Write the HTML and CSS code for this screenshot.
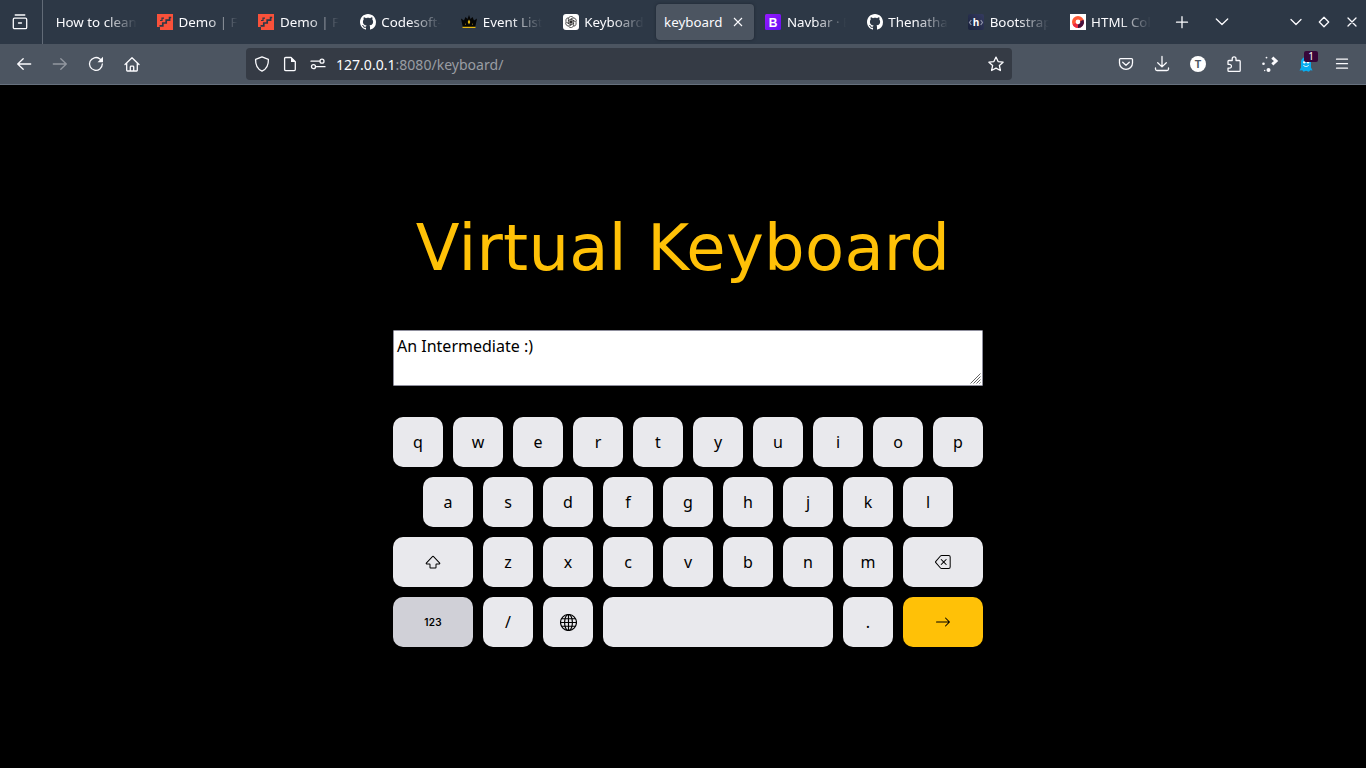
FILE: index.html
```html
<!DOCTYPE html>
<html lang="en">
<head>
<meta charset="utf-8">
<title>keyboard</title>
<link rel="stylesheet" href="styles.css">
</head>
<body>
<svg class="defs" aria-hidden="true">
  <symbol id="github" viewBox="0 0 16 16"><path d="M8 0C3.58 0 0 3.58 0 8c0 3.54 2.29 6.53 5.47 7.59.4.07.55-.17.55-.38 0-.19-.01-.82-.01-1.49-2.01.37-2.53-.49-2.69-.94-.09-.23-.48-.94-.82-1.13-.28-.15-.68-.52-.01-.53.63-.01 1.08.58 1.23.82.72 1.21 1.87.87 2.33.66.07-.52.28-.87.51-1.07-1.78-.2-3.64-.89-3.64-3.95 0-.87.31-1.59.82-2.15-.08-.2-.36-1.02.08-2.12 0 0 .67-.21 2.2.82.64-.18 1.32-.27 2-.27s1.36.09 2 .27c1.53-1.04 2.2-.82 2.2-.82.44 1.1.16 1.92.08 2.12.51.56.82 1.27.82 2.15 0 3.07-1.87 3.75-3.65 3.95.29.25.54.73.54 1.48 0 1.07-.01 1.93-.01 2.2 0 .21.15.46.55.38A8.01 8.01 0 0 0 16 8c0-4.42-3.58-8-8-8"/></symbol>
  <symbol id="steps" viewBox="0 0 16 16"><path fill="#f9513a" d="M0 0h16v16H3v-3H0z"/><path fill="none" stroke="#2d3846" stroke-width="1.700" d="M2.500 11.800h3.300V9h3.400V6.200h3.400V3.500h1.600"/><path fill="none" stroke="#2d3846" stroke-width="1.200" d="M3 6.500h2V4.200h2"/></symbol>
</svg>
<header class="tabs">
  <div class="recent"><svg class="ico" viewBox="0 0 16 16"><path d="M3.200 1h9.600M2.500 4.200h11c.7 0 1.200.5 1.200 1.200v8c0 .8-.5 1.300-1.300 1.300H2.600c-.8 0-1.300-.5-1.300-1.300v-8c0-.7.500-1.200 1.200-1.200zM6.500 9h3"/></svg></div>
  <nav class="strip">
    <div class="tab"><span class="label">How to clean</span></div>
    <div class="tab"><svg class="fav"><use href="#steps"/></svg><span class="label">Demo | F</span></div>
    <div class="tab"><svg class="fav"><use href="#steps"/></svg><span class="label">Demo | F</span></div>
    <div class="tab"><svg class="fav white"><use href="#github"/></svg><span class="label">Codesoft-</span></div>
    <div class="tab"><svg class="fav" viewBox="0 0 16 16"><path fill="#050505" d="M0 4.500 3 6.500 4.500 3l2 2L8 1l1.500 4 2-2L13 6.500l3-2L14 14H2z"/><path fill="#e8b90f" d="m8 5.500 1.300 2.500L8 10.500 6.700 8zM1.500 12.800h13v1.200h-13z"/><path stroke="#ad8b13" stroke-width=".6" d="M4.500 9.500v1.500M11.500 9.500v1.500"/></svg><span class="label">Event List</span></div>
    <div class="tab"><svg class="fav" viewBox="0 0 16 16"><rect width="16" height="16" rx="3" fill="#fff"/><g fill="none" stroke="#222" stroke-width=".7"><path id="loop" d="M5.400 9.500V5.100a2.700 2.700 0 0 1 5-1.400M5.400 6.500l4 2.300"/><use href="#loop" transform="rotate(60 8 8)"/><use href="#loop" transform="rotate(120 8 8)"/><use href="#loop" transform="rotate(180 8 8)"/><use href="#loop" transform="rotate(240 8 8)"/><use href="#loop" transform="rotate(300 8 8)"/></g></svg><span class="label">Keyboard</span></div>
    <div class="tab active"><span class="title">keyboard</span><svg class="close" viewBox="0 0 10 10"><path d="m1 1 8 8M9 1 1 9"/></svg></div>
    <div class="tab"><svg class="fav" viewBox="0 0 16 16"><defs><linearGradient id="violet" x1="0" y1="0" x2="1" y2="1"><stop stop-color="#9618ff"/><stop offset="1" stop-color="#6610f2"/></linearGradient></defs><rect width="16" height="16" rx="1.500" fill="url(#violet)"/><text class="mark-b" x="8" y="12.500">B</text></svg><span class="label">Navbar · B</span></div>
    <div class="tab"><svg class="fav white"><use href="#github"/></svg><span class="label">Thenatha</span></div>
    <div class="tab"><svg class="fav" viewBox="0 0 16 16"><defs><linearGradient id="navy" x1="0" y1="1" x2="1" y2="0"><stop stop-color="#19213b"/><stop offset="1" stop-color="#353b60"/></linearGradient></defs><rect width="16" height="16" rx="2" fill="url(#navy)"/><path fill="none" stroke="#8e92a8" stroke-width="1.200" d="M3.300 6 1.500 8.500 3.300 11M12.700 6l1.800 2.500-1.800 2.500"/><text class="mark-h" x="8" y="12">h</text></svg><span class="label">Bootstrap</span></div>
    <div class="tab"><svg class="fav" viewBox="0 0 16 16"><path fill="#fff" d="M0 0h16v16H0z"/><g fill="none" stroke-width="3.600"><circle cx="8" cy="8" r="4.200" stroke="#ff5a36"/><path stroke="#ef2c43" d="M4.200 9.800A4.200 4.200 0 0 0 8 12.200"/><path stroke="#47123f" d="M8 12.200A4.200 4.200 0 0 0 11.900 6.500"/></g></svg><span class="label">HTML Col</span></div>
  </nav>
  <svg class="ico newtab" viewBox="0 0 16 16"><path d="M8 2.700v11M2.500 8.200h11"/></svg>
  <svg class="ico alltabs" viewBox="0 0 16 16"><path d="m2.300 5 5.700 5.500L13.700 5"/></svg>
  <div class="window">
    <svg class="ico" viewBox="0 0 16 16"><path d="m3 5.500 5 5 5-5"/></svg>
    <svg class="ico" viewBox="0 0 16 16"><path d="M8 3.300 12.700 8 8 12.700 3.300 8z"/></svg>
    <svg class="ico" viewBox="0 0 16 16"><path d="m4 4 8 8M12 4l-8 8"/></svg>
  </div>
</header>
<div class="toolbar">
  <span class="btn"><svg class="ico" viewBox="0 0 16 16"><path d="M14.700 8H1.700M7.200 2.700 1.700 8l5.500 5.300"/></svg></span>
  <span class="btn dim"><svg class="ico" viewBox="0 0 16 16"><path d="M1.300 8h13M8.800 2.700 14.300 8l-5.500 5.300"/></svg></span>
  <span class="btn"><svg class="ico" viewBox="0 0 16 16"><path d="M14.300 8A6.400 6.400 0 1 1 11.700 2.800l2 1.900"/><path class="solid" d="M15 .8v5.500H9.500z"/></svg></span>
  <span class="btn"><svg class="ico home" viewBox="0 0 16 16"><path d="m1 8.500 7-6.800 7 6.800M2.700 7.200v7.100c0 .4.300.7.700.7h9.200c.4 0 .7-.3.700-.7V7.200M6.300 15v-4c0-.5.300-.8.800-.8h1.800c.5 0 .8.300.8.800v4"/></svg></span>
  <div class="url">
    <svg class="ico shield" viewBox="0 0 16 16"><path d="m8 .9 6.400 2.500c.2 5-.8 9.300-6.400 11.800C2.400 12.700 1.400 8.400 1.600 3.400z"/></svg>
    <svg class="ico page" viewBox="0 0 16 16"><path d="M3.700 1.500H9l4.300 4.200v7.800c0 .7-.4 1.100-1.100 1.100H3.700c-.7 0-1.100-.4-1.100-1.100V2.600c0-.7.400-1.100 1.100-1.100z"/><path class="solid" d="M9 1.200v4.800h4.500z"/></svg>
    <svg class="ico perms" viewBox="0 0 16 16"><path d="M1 5.200h8.500M6.500 10.700H15"/><circle cx="12" cy="5.200" r="2"/><circle cx="3.500" cy="10.700" r="2"/></svg>
    <span class="address">127.0.0.1<span class="path">:8080/keyboard/</span></span>
    <svg class="ico star" viewBox="0 0 16 16"><path d="m8 1.100 2.100 4.500 5 .6-3.700 3.400 1 4.900L8 12.100l-4.400 2.400 1-4.900L.9 6.200l5-.6z"/></svg>
  </div>
  <span class="btn"><svg class="ico" viewBox="0 0 16 16"><path d="M2.500 2.600h11c.6 0 1 .4 1 1v3.300a6.500 6.500 0 0 1-13 0V3.600c0-.6.400-1 1-1zM4.700 6.300 8 9.300l3.300-3"/></svg></span>
  <span class="btn"><svg class="ico down" viewBox="0 0 16 16"><path d="M8 .5v10.200M3.700 6.700 8 10.900l4.300-4.200M1.500 12v1c0 .9.500 1.500 1.500 1.500h10c1 0 1.500-.6 1.500-1.500v-1"/></svg></span>
  <span class="btn"><span class="avatar">T</span></span>
  <span class="btn"><svg class="ico" viewBox="0 0 16 16"><path d="M2 8.300V5.400c0-.5.300-.9.900-.9h3.300V2.800a1.900 1.900 0 0 1 3.800 0v1.700h3.300c.6 0 .9.400.9.900v9c0 .5-.3.900-.9.900H2.900c-.6 0-.9-.4-.9-.9v-2.200h1.500a1.900 1.900 0 0 0 0-3.900z"/></svg></span>
  <span class="btn"><svg class="ico" viewBox="0 0 16 16"><g class="solid"><circle cx="1.500" cy="7.700" r="1.300"/><circle cx="4.500" cy="1.600" r=".9"/><circle cx="2.700" cy="14.500" r=".7"/><circle cx="6.500" cy="14" r="2"/></g><path class="thick" d="m10.300 1.700 3.700 3.300-3.700 3.300"/></svg></span>
  <span class="btn ghost"><svg class="fav" viewBox="0 0 16 16"><path fill="#08adf0" d="M3 6a5 5 0 0 1 10 0v5.500l1.500 3-2.200-.3-1.500 1.500L8 14.700l-2.500 1-1.200-1.500-2.800.3L3 11.500z"/><circle cx="6.300" cy="6.300" r="1.200" fill="#fff"/><circle cx="10" cy="6.300" r="1.200" fill="#fff"/><path fill="none" stroke="#fff" d="M5.300 9c1.300 2 4.300 2 5.400 0"/></svg><span class="badge">1</span></span>
  <span class="btn"><svg class="ico" viewBox="0 0 16 16"><path d="M2.500 3.200h11M2.500 7.700h11M2.500 12.200h11"/></svg></span>
</div>
<main class="page-body">
  <h1 class="heading">Virtual Keyboard</h1>
  <div class="field"><textarea class="input" spellcheck="false">An Intermediate :)</textarea><svg class="grip" viewBox="0 0 11 11"><path d="M.5 10.500l10-10M3.500 10.500l7-7M6.500 10.500l4-4M9.500 10.500l1-1"/></svg></div>
  <div class="keys">
    <div class="row"><button class="key">q</button><button class="key">w</button><button class="key">e</button><button class="key">r</button><button class="key">t</button><button class="key">y</button><button class="key">u</button><button class="key">i</button><button class="key">o</button><button class="key">p</button></div>
    <div class="row"><button class="key">a</button><button class="key">s</button><button class="key">d</button><button class="key">f</button><button class="key">g</button><button class="key">h</button><button class="key">j</button><button class="key">k</button><button class="key">l</button></div>
    <div class="row"><button class="key wide"><svg class="glyph" viewBox="0 0 16 16"><path d="M7.270 2.047a1 1 0 0 1 1.460 0l6.345 6.770c.6.638.146 1.683-.73 1.683H11.500v3a1 1 0 0 1-1 1h-5a1 1 0 0 1-1-1v-3H1.654C.78 10.500.326 9.455.924 8.816zM14.346 9.500 8 2.731 1.654 9.500H4.500a1 1 0 0 1 1 1v3h5v-3a1 1 0 0 1 1-1z"/></svg></button><button class="key">z</button><button class="key">x</button><button class="key">c</button><button class="key">v</button><button class="key">b</button><button class="key">n</button><button class="key">m</button><button class="key wide"><svg class="glyph" viewBox="0 0 16 16"><path d="M5.830 5.146a.5.5 0 0 0 0 .708L7.975 8l-2.147 2.146a.5.5 0 0 0 .707.708l2.147-2.147 2.146 2.147a.5.5 0 0 0 .707-.708L9.390 8l2.146-2.146a.5.5 0 0 0-.707-.708L8.683 7.293 6.536 5.146a.5.5 0 0 0-.707 0z"/><path d="M13.683 1a2 2 0 0 1 2 2v10a2 2 0 0 1-2 2h-7.080a2 2 0 0 1-1.519-.698L.241 8.650a1 1 0 0 1 0-1.302L5.084 1.700A2 2 0 0 1 6.603 1zm-7.080 1a1 1 0 0 0-.76.35L1 8l4.844 5.650a1 1 0 0 0 .759.35h7.080a1 1 0 0 0 1-1V3a1 1 0 0 0-1-1z"/></svg></button></div>
    <div class="row"><button class="key wide gray">123</button><button class="key">/</button><button class="key"><svg class="glyph line" viewBox="0 0 16 16"><circle cx="8" cy="8" r="7.500"/><ellipse cx="8" cy="8" rx="3.700" ry="7.500"/><path d="M8 .5v15M.5 8h15M1.600 4.500h12.800M1.600 11.500h12.800"/></svg></button><button class="key space" aria-label="Space"></button><button class="key">.</button><button class="key wide gold"><svg class="glyph" viewBox="0 0 16 16"><path d="M1 8a.5.5 0 0 1 .5-.5h11.793l-3.147-3.146a.5.5 0 0 1 .708-.708l4 4a.5.5 0 0 1 0 .708l-4 4a.5.5 0 0 1-.708-.708L13.293 8.500H1.500A.5.5 0 0 1 1 8"/></svg></button></div>
  </div>
</main>
</body>
</html>
```
FILE: styles.css
```css
* { box-sizing: border-box; }
body { margin: 0; height: 768px; overflow: hidden; background: #000; font-family: "Noto Sans", sans-serif; }
.defs { position: absolute; width: 0; height: 0; }
.ico { width: 16px; height: 16px; flex: none; fill: none; stroke: #fbfbfe; stroke-width: 1.3; stroke-linecap: round; stroke-linejoin: round; overflow: visible; }
.ico .solid { fill: #fbfbfe; stroke: none; }
.ico .thick { stroke-width: 3; stroke-linecap: butt; stroke-linejoin: miter; }

.tabs { height: 44px; display: flex; align-items: center; background: #2d3846; color: #fbfbfe; font-size: 13.33px; }
.recent { width: 43px; height: 44px; padding-left: 12px; display: flex; align-items: center; border-right: 1px solid #626b77; }
.strip { display: flex; margin-left: 4.700px; flex: none; }
.tab { width: 101.400px; height: 36px; padding: 0 12.400px 0 8px; display: flex; align-items: center; gap: 5.500px; flex: none; }
.fav { width: 16px; height: 16px; flex: none; }
.white { fill: #fff; }
.label { flex: 1; min-width: 0; overflow: hidden; white-space: nowrap; -webkit-mask-image: linear-gradient(to left, transparent, #000 32px); mask-image: linear-gradient(to left, transparent, #000 32px); }
.active { width: 98px; margin-right: 3.400px; padding: 0 11px 0 8px; justify-content: space-between; background: #4c5561; border-radius: 4px; box-shadow: 0 0 3px #1d2530; }
.close { width: 10px; height: 10px; stroke: #fbfbfe; stroke-width: 1.100; }
.mark-b { font: bold 12px "Liberation Sans", sans-serif; fill: #fff; text-anchor: middle; }
.mark-h { font: bold 10px "Open Sans", sans-serif; fill: #fff; text-anchor: middle; }
.newtab { margin-left: 11px; }
.alltabs { margin-left: 24.500px; }
.window { margin-left: auto; padding-right: 6px; display: flex; gap: 12px; }

.toolbar { height: 41px; padding: 0 6px; display: flex; align-items: center; background: #4c5561; border-bottom: 1px solid #67717e; }
.btn { width: 36px; height: 32px; display: flex; align-items: center; justify-content: center; flex: none; }
.dim { opacity: .4; }
.home, .down { margin-right: 1px; }
.url { width: 766px; height: 32px; margin: 0 auto; padding: 0 8px; display: flex; align-items: center; background: #353b45; border-radius: 4px; }
.page { margin-left: 12px; }
.perms { margin-left: 12px; }
.address { flex: 1; margin-left: 10px; font-size: 14.050px; color: #fbfbfe; white-space: nowrap; }
.path { color: #999da3; }
.avatar { width: 16px; height: 16px; border-radius: 50%; background: #fff; color: #4c5561; font: bold 10.500px/16px "Liberation Sans", sans-serif; text-align: center; }
.ghost { position: relative; }
.badge { position: absolute; left: 16px; top: 3px; width: 14px; height: 11px; border-radius: 2px; background: #370639; color: #fff; font-size: 10px; line-height: 11px; text-align: center; }

.page-body { width: 590px; margin-left: 393px; padding-top: 126px; }
.heading { margin: 0; width: 580px; height: 75px; font: 400 64px/75px "DejaVu Sans", sans-serif; letter-spacing: .25px; color: #ffc107; text-align: center; white-space: nowrap; }
.field { position: relative; height: 56px; margin-top: 44px; }
.input { display: block; width: 590px; height: 56px; margin: 0; padding: 3px; border: 1px solid #8f8f9d; border-radius: 1px; background: #fff; color: #000; font: 16px/24px "Noto Sans", sans-serif; resize: none; outline: 0; overflow: hidden; }
.grip { position: absolute; right: 2px; bottom: 2px; width: 11px; height: 11px; stroke: #555; stroke-width: .9; }
.keys { margin-top: 31px; display: flex; flex-direction: column; gap: 10px; }
.row { display: flex; justify-content: center; gap: 10px; }
.key { width: 50px; height: 50px; padding: 0; border: 0; border-radius: 10px; background: #e9e9ed; color: #000; font: 16px "Noto Sans", sans-serif; display: flex; align-items: center; justify-content: center; }
.wide { width: 80px; }
.space { width: 230px; }
.gray { background: #d0d0d7; font: 600 10px Inter, sans-serif; letter-spacing: .2px; }
.gold { background: #ffc107; }
.glyph { width: 16px; height: 16px; }
.line { width: 17px; height: 17px; fill: none; stroke: #000; stroke-width: 1.100; }
```
